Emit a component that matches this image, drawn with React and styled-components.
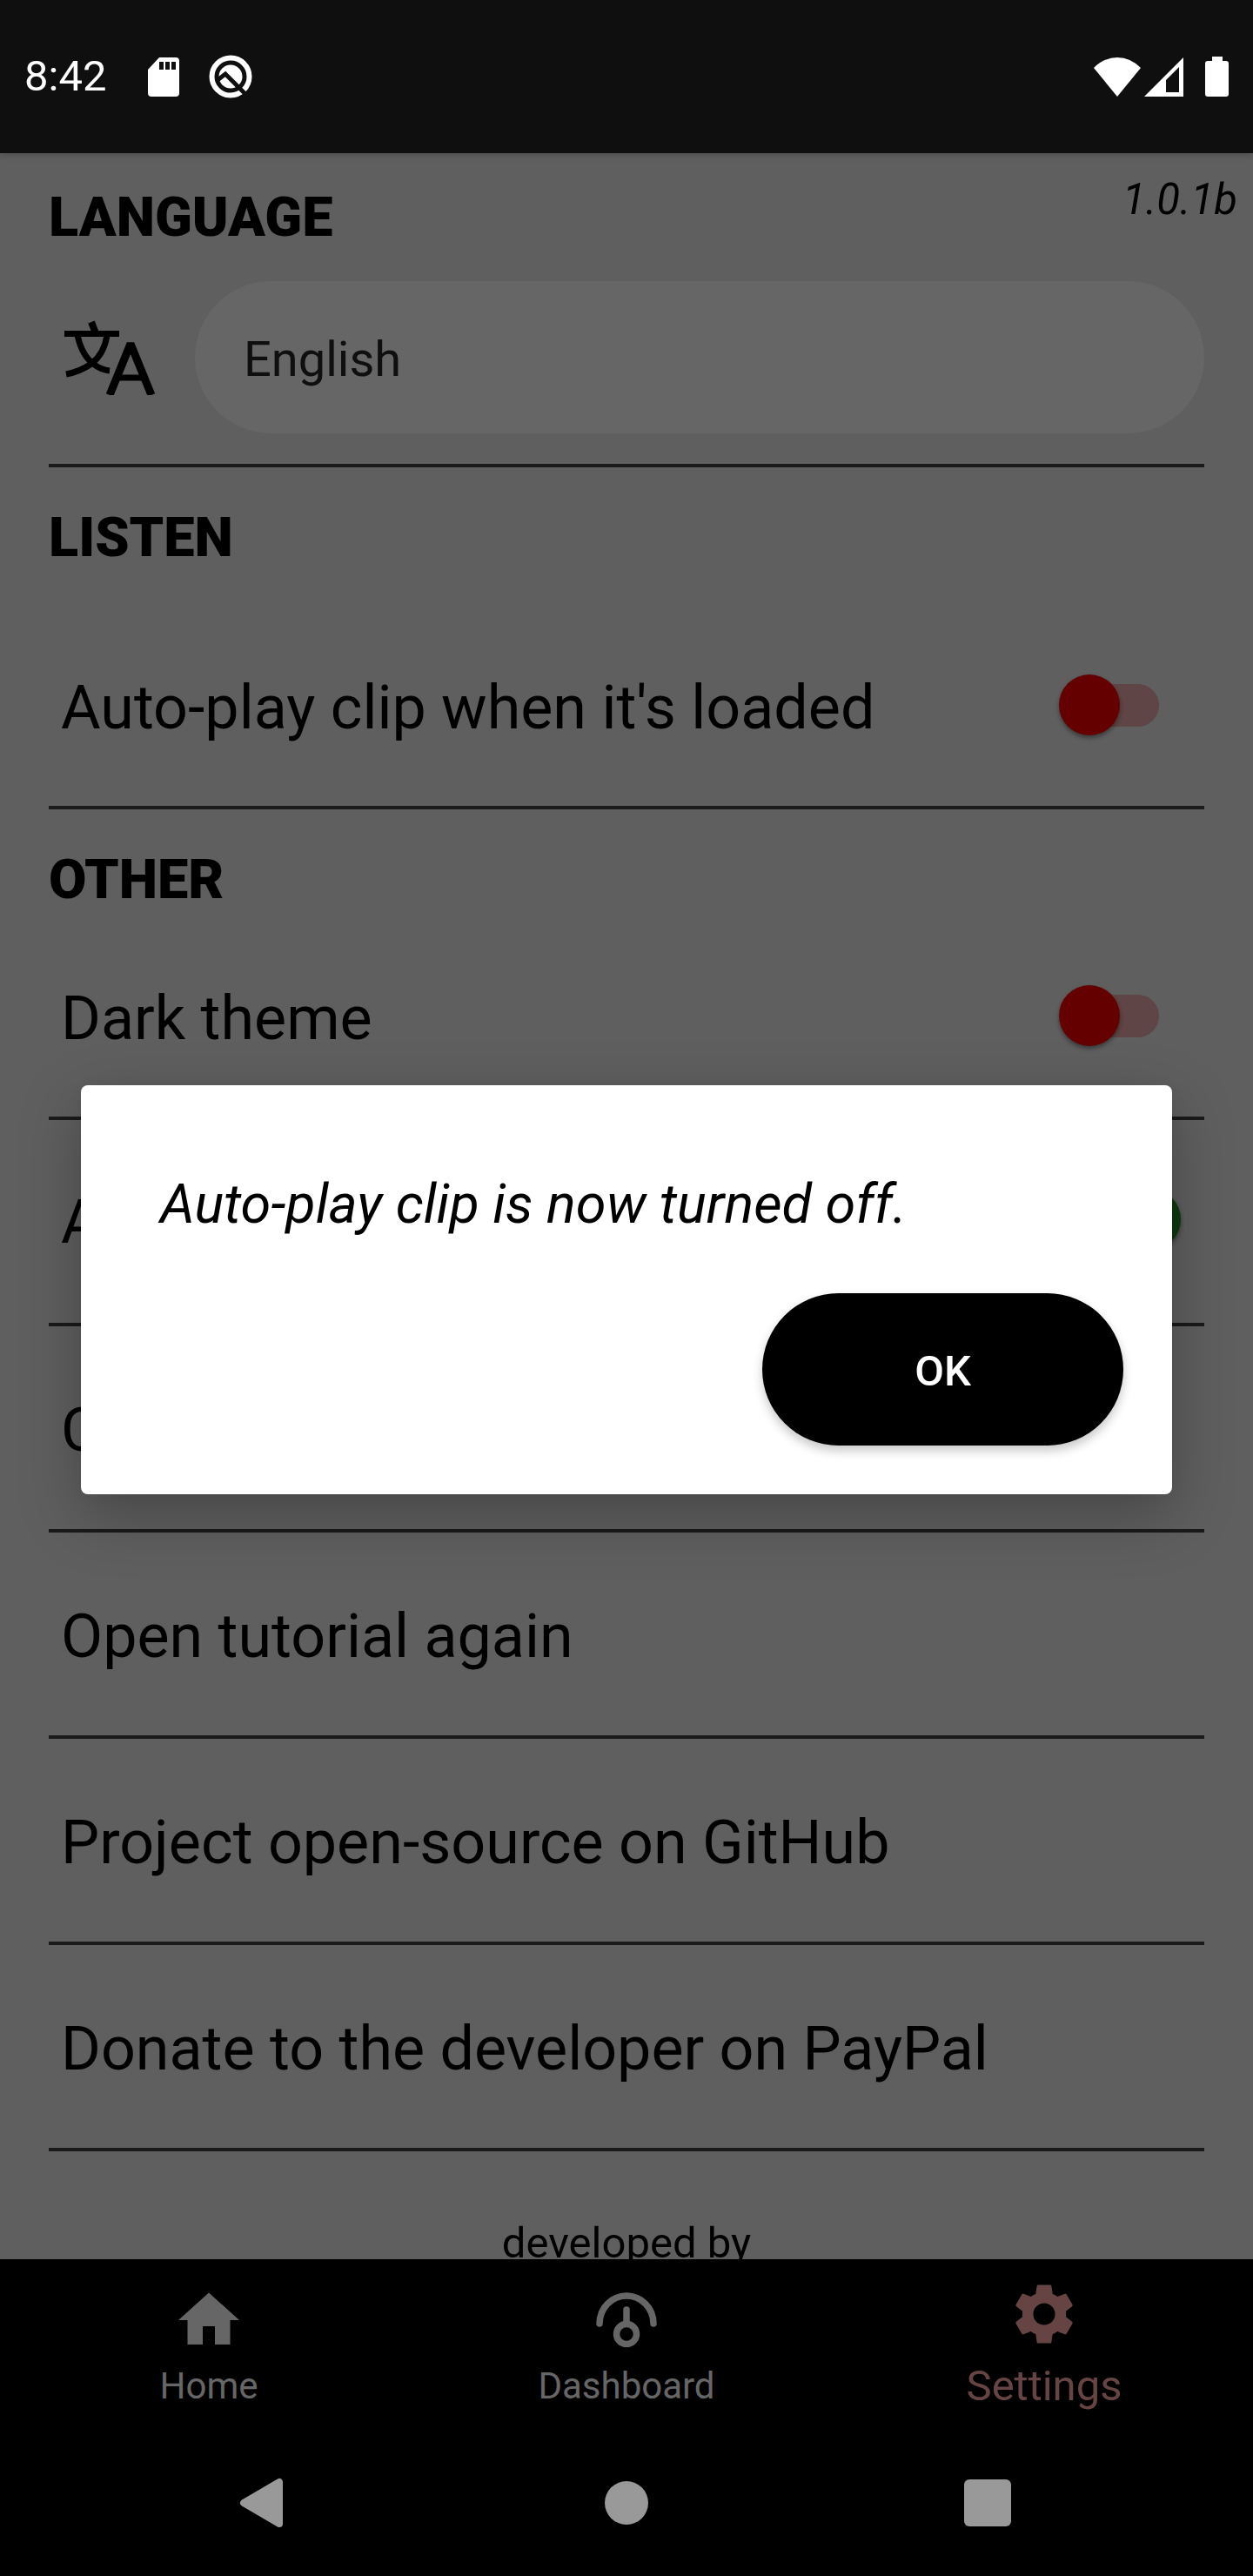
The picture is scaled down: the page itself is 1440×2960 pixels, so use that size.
import React, { useState } from 'react';
import styled, { createGlobalStyle } from 'styled-components';
import { MdSettings } from 'react-icons/md';

const GlobalStyle = createGlobalStyle`
  *, *::before, *::after { box-sizing: border-box; }
  body { margin: 0; background: #000; font-family: Roboto, "Noto Sans", sans-serif; }
  button, select, input { font-family: inherit; margin: 0; }
`;

const Screen = styled.div`
  display: flex;
  flex-direction: column;
  height: 100vh;
  color: #000;
  background: #5f5f5f;
`;

const StatusBar = styled.header`
  display: flex;
  align-items: center;
  justify-content: space-between;
  flex: none;
  height: 176px;
  padding: 0 28px;
  background: #0f0f0f;
  color: #fff;
  box-shadow: 0 2px 8px rgba(0, 0, 0, 0.2);
  z-index: 1;
`;

const StatusGroup = styled.div`
  display: flex;
  align-items: center;
  gap: ${(p) => p.$gap}px;
`;

const Clock = styled.time`
  font-size: 49px;
  line-height: 58px;
  margin-right: 14px;
`;

const Content = styled.main`
  flex: 1;
  min-height: 0;
  overflow-y: auto;
  scrollbar-width: none;
`;

const TopLine = styled.div`
  display: flex;
  align-items: flex-start;
  justify-content: space-between;
  padding: 25px 18px 0 56px;
`;

const Version = styled.span`
  font-size: 49px;
  font-style: italic;
  line-height: 58px;
`;

const Heading = styled.h2`
  margin: ${(p) => p.$top}px 0 0;
  font-size: 63px;
  line-height: 76px;
  font-weight: 900;
`;

const Section = styled.section`
  padding: 0 56px;
`;

const LanguageRow = styled.div`
  display: flex;
  align-items: center;
  padding: 35px 0;
  border-bottom: 4px solid #1a1a1a;
`;

const LanguageLabel = styled.label`
  display: flex;
  flex: none;
  width: 168px;
  padding-left: 14px;
`;

const LanguageSelect = styled.select`
  appearance: none;
  flex: 1;
  min-width: 0;
  height: 175px;
  padding: 4px 56px 0;
  border: 0;
  border-radius: 88px;
  background: #666;
  color: #0f0f0f;
  font-size: 56px;
`;

const SettingRow = styled.div`
  display: flex;
  align-items: center;
  justify-content: space-between;
  min-height: ${(p) => (p.$compact ? 230 : 237)}px;
  margin-top: ${(p) => p.$top || 0}px;
  padding: 0 27px 0 14px;
  border-bottom: 4px solid #1a1a1a;
  font-size: 70px;
  line-height: 82px;
`;

const RowButton = styled.button`
  display: block;
  width: 100%;
  min-height: 237px;
  padding: 4px 14px 0;
  border: 0;
  border-bottom: 4px solid #1a1a1a;
  background: none;
  color: inherit;
  font-size: 70px;
  line-height: 82px;
  text-align: left;
`;

const RowLink = styled(RowButton).attrs({ as: 'a' })`
  display: flex;
  align-items: center;
  text-decoration: none;
`;

const Switch = styled.input.attrs({ type: 'checkbox', role: 'switch' })`
  appearance: none;
  position: relative;
  display: flex;
  align-items: center;
  flex: none;
  width: 140px;
  height: 70px;
  margin-bottom: 6px;

  &::before {
    content: '';
    flex: 1;
    height: 49px;
    margin: 0 25px;
    border-radius: 25px;
    background: ${(p) => (p.checked ? '#455f45' : '#5f4545')};
  }

  &::after {
    content: '';
    position: absolute;
    top: 0;
    left: ${(p) => (p.checked ? 70 : 0)}px;
    width: 70px;
    height: 70px;
    border-radius: 50%;
    background: ${(p) => (p.checked ? '#0d3a0f' : '#640000')};
    box-shadow: 0 3px 5px rgba(0, 0, 0, 0.4);
  }
`;

const Credit = styled.p`
  margin: 0;
  padding: 77px 0 56px;
  font-size: 49px;
  line-height: 58px;
  text-align: center;
`;

const TabBar = styled.nav`
  display: grid;
  grid-template-columns: repeat(3, 1fr);
  flex: none;
  height: 196px;
  background: #000;
`;

const Tab = styled.a`
  display: flex;
  flex-direction: column;
  align-items: center;
  justify-content: space-between;
  padding: ${(p) => (p.$active ? 21 : 28)}px 0 ${(p) => (p.$active ? 21 : 25)}px;
  color: ${(p) => (p.$active ? '#664444' : '#666')};
  font-size: ${(p) => (p.$active ? 49 : 42)}px;
  line-height: ${(p) => (p.$active ? 58 : 50)}px;
  text-decoration: none;
`;

const SystemBar = styled.div`
  display: flex;
  align-items: center;
  justify-content: space-around;
  flex: none;
  height: 168px;
  padding: 0 98px;
  background: #000;
`;

const SystemButton = styled.button`
  display: flex;
  padding: 0;
  border: 0;
  background: none;
  color: #999;
`;

const Overlay = styled.div`
  position: fixed;
  inset: 0;
  z-index: 2;
  display: flex;
  align-items: center;
  justify-content: center;
  padding: 172px 93px 168px;
`;

const Dialog = styled.div`
  display: flex;
  flex-direction: column;
  align-items: flex-end;
  gap: 64px;
  width: 100%;
  padding: 99px 56px 56px 91px;
  border-radius: 8px;
  background: #fff;
  box-shadow: 0 24px 70px rgba(0, 0, 0, 0.26), 0 0 24px rgba(0, 0, 0, 0.06);
`;

const Message = styled.p`
  align-self: stretch;
  margin: 0;
  font-size: 63px;
  font-style: italic;
  line-height: 76px;
`;

const OkButton = styled.button`
  width: 415px;
  height: 175px;
  padding: 4px 0 0;
  border: 0;
  border-radius: 88px;
  background: #000;
  color: #fff;
  font-size: 49px;
  font-weight: 500;
  box-shadow: 0 6px 12px rgba(0, 0, 0, 0.22);
`;

const SdCardIcon = () => (
  <svg width="36" height="45" viewBox="0 0 36 45" fill="currentColor" aria-hidden="true">
    <path fillRule="evenodd" d="M13 0H32a4 4 0 0 1 4 4V41a4 4 0 0 1-4 4H4a4 4 0 0 1-4-4V14ZM13 5V14H18V5ZM20 5V14H25V5ZM27 5V14H32V5Z" />
  </svg>
);

const AlertIcon = () => (
  <svg width="50" height="50" viewBox="0 0 50 50" aria-hidden="true">
    <circle cx="25" cy="25" r="21.5" fill="none" stroke="#fff" strokeWidth="6" />
    <circle cx="25" cy="25" r="13.5" fill="#fff" />
    <path d="M10 29L19 22L42 45" fill="none" stroke="#0f0f0f" strokeWidth="5" />
  </svg>
);

const WifiIcon = () => (
  <svg width="54" height="45" viewBox="0 0 54 45" fill="currentColor" aria-hidden="true">
    <path d="M0 12Q12 0 27 0T54 12L27 45Z" />
  </svg>
);

const SignalIcon = () => (
  <svg width="45" height="45" viewBox="0 0 45 45" fill="currentColor" aria-hidden="true">
    <path fillRule="evenodd" d="M45 0V45H0ZM40 11L25 26V40H40Z" />
  </svg>
);

const BatteryIcon = () => (
  <svg width="27" height="46" viewBox="0 0 27 46" fill="currentColor" aria-hidden="true">
    <path d="M8 0H20V5H24a3 3 0 0 1 3 3V43a3 3 0 0 1-3 3H3a3 3 0 0 1-3-3V8a3 3 0 0 1 3-3H8Z" />
  </svg>
);

const TranslateIcon = () => (
  <svg width="112" height="86" viewBox="0 0 112 86" aria-hidden="true">
    <g fill="none" stroke="#000" strokeWidth="7">
      <path d="M4 15.500H67M19 17C22 31 28 43 37 50Q46 57 56 58M53 17C51 31 44 43 35 50Q22 59 6 62" />
      <path d="M35 2L40 15" strokeWidth="8" />
      <path d="M56 86L80 27L104 86" strokeWidth="9" strokeLinejoin="bevel" />
      <path d="M66 66H94" />
    </g>
  </svg>
);

const HomeIcon = () => (
  <svg width="84" height="84" viewBox="0 0 24 24" fill="currentColor" aria-hidden="true">
    <path d="M10 20v-6h4v6h5v-8h3L12 3 2 12h3v8z" />
  </svg>
);

const DashboardIcon = () => (
  <svg width="84" height="84" viewBox="0 0 84 84" fill="none" stroke="currentColor" strokeWidth="7.500" strokeLinecap="round" aria-hidden="true">
    <path d="M11 46A31 32 0 0 1 73 46M42 30V45" />
    <circle cx="42" cy="58" r="11.500" />
  </svg>
);

const BackIcon = () => (
  <svg width="98" height="98" viewBox="0 0 98 98" fill="currentColor" stroke="currentColor" strokeWidth="8" strokeLinejoin="round" aria-hidden="true">
    <path d="M65 25V73L24 49Z" />
  </svg>
);

const CircleIcon = () => (
  <svg width="98" height="98" viewBox="0 0 98 98" fill="currentColor" aria-hidden="true">
    <circle cx="49" cy="49" r="25" />
  </svg>
);

const SquareIcon = () => (
  <svg width="98" height="98" viewBox="0 0 98 98" fill="currentColor" aria-hidden="true">
    <rect x="22" y="22" width="54" height="54" rx="6" />
  </svg>
);

function ToggleSetting({ id, label, initial = false, compact, top }) {
  const [on, setOn] = useState(initial);
  return (
    <SettingRow $compact={compact} $top={top}>
      <label htmlFor={id}>{label}</label>
      <Switch id={id} checked={on} onChange={(e) => setOn(e.target.checked)} />
    </SettingRow>
  );
}

export default function App() {
  const [open, setOpen] = useState(true);
  return (
    <Screen>
      <GlobalStyle />
      <StatusBar>
        <StatusGroup $gap={34}>
          <Clock>8:42</Clock>
          <SdCardIcon />
          <AlertIcon />
        </StatusGroup>
        <StatusGroup $gap={25}>
          <StatusGroup $gap={4}>
            <WifiIcon />
            <SignalIcon />
          </StatusGroup>
          <BatteryIcon />
        </StatusGroup>
      </StatusBar>

      <Content>
        <TopLine>
          <Heading $top={11}>LANGUAGE</Heading>
          <Version>1.0.1b</Version>
        </TopLine>
        <Section>
          <LanguageRow>
            <LanguageLabel htmlFor="language" aria-label="Language">
              <TranslateIcon />
            </LanguageLabel>
            <LanguageSelect id="language" defaultValue="en">
              <option value="en">English</option>
            </LanguageSelect>
          </LanguageRow>
        </Section>
        <Section>
          <Heading $top={43}>LISTEN</Heading>
          <ToggleSetting id="autoplay" label="Auto-play clip when it's loaded" compact top={44} />
        </Section>
        <Section>
          <Heading $top={43}>OTHER</Heading>
          <ToggleSetting id="dark" label="Dark theme" compact top={8} />
          <ToggleSetting id="statistics" label="Anonymous statistics" initial />
          <RowButton type="button">Contact the developer</RowButton>
          <RowButton type="button">Open tutorial again</RowButton>
          <RowLink href="#github">Project open-source on GitHub</RowLink>
          <RowLink href="#paypal">Donate to the developer on PayPal</RowLink>
        </Section>
        <Credit>developed by</Credit>
      </Content>

      <TabBar>
        <Tab href="#home"><HomeIcon />Home</Tab>
        <Tab href="#dashboard"><DashboardIcon />Dashboard</Tab>
        <Tab href="#settings" $active aria-current="page"><MdSettings size={84} aria-hidden="true" />Settings</Tab>
      </TabBar>
      <SystemBar>
        <SystemButton type="button" aria-label="Back"><BackIcon /></SystemButton>
        <SystemButton type="button" aria-label="Home screen"><CircleIcon /></SystemButton>
        <SystemButton type="button" aria-label="Recent apps"><SquareIcon /></SystemButton>
      </SystemBar>

      {open && (
        <Overlay>
          <Dialog role="dialog" aria-modal="true" aria-labelledby="message">
            <Message id="message">Auto-play clip is now turned off.</Message>
            <OkButton type="button" onClick={() => setOpen(false)}>OK</OkButton>
          </Dialog>
        </Overlay>
      )}
    </Screen>
  );
}
